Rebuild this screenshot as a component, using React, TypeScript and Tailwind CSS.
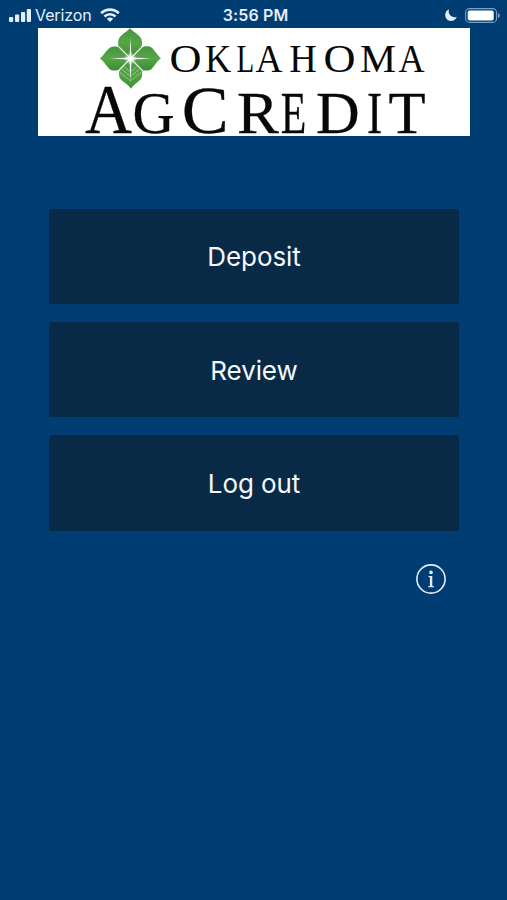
type Glyph = { char: string; x: number; width: number; size: number };

const TOP_LINE: Glyph[] = [
  { char: "O", x: 169.5, width: 32, size: 40 },
  { char: "K", x: 205, width: 26.2, size: 40 },
  { char: "L", x: 236.5, width: 17.7, size: 40 },
  { char: "A", x: 255.4, width: 27, size: 40 },
  { char: "H", x: 289.3, width: 27.5, size: 40 },
  { char: "O", x: 323.5, width: 32, size: 40 },
  { char: "M", x: 360, width: 36, size: 40 },
  { char: "A", x: 398.5, width: 26.1, size: 40 },
];

const BOTTOM_LINE: Glyph[] = [
  { char: "A", x: 85, width: 47, size: 70 },
  { char: "G", x: 132.6, width: 42.1, size: 59 },
  { char: "C", x: 181.8, width: 46.9, size: 68 },
  { char: "R", x: 237, width: 41.8, size: 59 },
  { char: "E", x: 280.8, width: 25.6, size: 59 },
  { char: "D", x: 316, width: 43.6, size: 59 },
  { char: "I", x: 367, width: 15.2, size: 59 },
  { char: "T", x: 388.5, width: 37.1, size: 59 },
];

const ACTIONS = ["Deposit", "Review", "Log out"];

function LogoLine({ glyphs, y }: { glyphs: Glyph[]; y: number }) {
  return (
    <>
      {glyphs.map((g, i) => (
        <text key={i} x={g.x} y={y} fontSize={g.size} textLength={g.width} lengthAdjust="spacingAndGlyphs">
          {g.char}
        </text>
      ))}
    </>
  );
}

/** Four-leaf mark followed by the two-line wordmark. */
function Logo() {
  return (
    <svg
      viewBox="38 28 432 108"
      className="block h-[108px] w-[432px] overflow-visible bg-white font-['Liberation_Serif',serif]"
      role="img"
      aria-label="Oklahoma AgCredit"
    >
      <defs>
        <linearGradient id="leaf" x1="0" y1="0" x2="0" y2="1">
          <stop offset="0" stopColor="#469440" />
          <stop offset="0.5" stopColor="#56a648" />
          <stop offset="1" stopColor="#398d32" />
        </linearGradient>
        <radialGradient id="glow">
          <stop offset="0" stopColor="#fff" />
          <stop offset="0.35" stopColor="#fff" stopOpacity="0.65" />
          <stop offset="1" stopColor="#fff" stopOpacity="0" />
        </radialGradient>
      </defs>
      <g fill="url(#leaf)">
        <path d="M130 28C132 31 138 34 140.5 37.5C142.5 40 142.5 46 140.8 48L130.5 58L119.6 48C117.6 46 117.6 40 119.6 37.500C122 34 128 31 130 28Z" />
        <path d="M161 58.3C158 60 154.500 66 151.500 69C149 71 143.500 71 141 69L130.500 58.500L141 48C143.500 46 149 45.500 151.500 47.500C154.500 50 158 56 161 58.3Z" />
        <path d="M99.800 58.500C103 56 106.500 50.500 109.500 48C112 46 117.500 46 120 48L130.500 58.500L120 69C117.500 71 112 71 109.500 69C106.500 66 103 60 99.800 58.500Z" />
        <path d="M131 88.800C129 85 123 82 120.500 79C118.500 76.500 118.500 71 120.500 69L130.500 59L141 69C142.700 71 142.700 76.500 140.800 79C138.500 82 133 85 131 88.800Z" />
      </g>
      {/* light gaps between the leaves */}
      <path d="M119 47L142 70M142 47L119 70" stroke="#e9f4e4" strokeWidth="1.1" />
      <path d="M130.5 38L131.5 57.4L151 58.5L131.5 59.6L130.5 82L129.5 59.6L110 58.5L129.5 57.4Z" fill="#fff" />
      <g stroke="#b9dcae" strokeWidth="0.8" fill="none" opacity="0.75">
        <path d="M130.5 72L137 66.5M130.5 76.5L140 68.5M130.5 81L141 72.5" />
        <path d="M130.5 72L124 66.5M130.5 76.5L121 68.5M130.5 81L120 72.5" />
      </g>
      <circle cx="130.5" cy="58.5" r="6.5" fill="url(#glow)" />
      <g fill="#080808">
        <LogoLine glyphs={TOP_LINE} y={72.3} />
      </g>
      <g fill="#080808" stroke="#080808" strokeWidth="0.3">
        <LogoLine glyphs={BOTTOM_LINE} y={133.3} />
      </g>
    </svg>
  );
}

function StatusBar() {
  return (
    <header className="grid h-7 grid-cols-[1fr_auto_1fr] items-center pt-[2px] text-[#e4eefa]">
      <div className="flex items-center pl-[9px]">
        <svg viewBox="0 0 22 13" className="h-[13px] w-[22px]" fill="currentColor">
          <rect x="0" y="8" width="4.2" height="5" rx="1" />
          <rect x="6" y="5.5" width="4.2" height="7.5" rx="1" />
          <rect x="12" y="3" width="4.2" height="10" rx="1" />
          <rect x="17.8" y="0" width="4.2" height="13" rx="1" />
        </svg>
        <span className="ml-[4px] text-[16px] leading-none tracking-[-0.1px]">Verizon</span>
        <svg viewBox="0 0 20 14" className="ml-[8px] h-[14px] w-[20px]" fill="none" stroke="currentColor">
          <path d="M1.2 5.2C6.1.4 13.9.4 18.8 5.2" strokeWidth="2.7" />
          <path d="M4.5 8.5C7.6 5.5 12.4 5.5 15.5 8.5" strokeWidth="2.5" />
          <path d="M10 14L6.8 10.8C8.6 9.2 11.4 9.2 13.2 10.8Z" fill="currentColor" stroke="none" />
        </svg>
      </div>
      <span className="pl-[4px] text-[16px] leading-none font-semibold tracking-[0.15px]">3:56 PM</span>
      <div className="flex items-center justify-end pr-[7px]">
        <svg viewBox="0 0 12 12" className="h-[12px] w-[12px]" fill="currentColor">
          <path d="M4 .2C2.6 4.8 6.3 9.3 11.8 8C10.6 10.5 8.5 12 6 12C2.7 12 .2 9.4 .2 6.1C.2 3.4 1.7 1.2 4 .2Z" />
        </svg>
        <svg viewBox="0 0 35 15" className="ml-[8px] h-[15px] w-[35px]">
          <rect x="0.6" y="0.6" width="31" height="13.8" rx="4" fill="none" stroke="#7c9fc4" strokeWidth="1.1" />
          <rect x="2.7" y="2.5" width="26" height="10" rx="2" fill="#fff" />
          <path d="M33 5C35.4 5.8 35.4 9.2 33 10Z" fill="#7c9fc4" />
        </svg>
      </div>
    </header>
  );
}

export default function App() {
  return (
    <div className="flex h-[900px] w-[507px] flex-col bg-[#003d73] font-[Inter,sans-serif]">
      <StatusBar />
      <div className="pl-[38px]">
        <Logo />
      </div>
      <main className="mt-[72.7px] flex flex-col gap-[17.7px] pr-[48px] pl-[49px]">
        {ACTIONS.map((label) => (
          <button
            key={label}
            className="h-[95.5px] rounded-[2px] bg-[#092a46] pt-[2px] text-[26px] leading-none tracking-[-0.1px] text-[#f4f8fd]"
          >
            {label}
          </button>
        ))}
      </main>
      <div className="mt-[33.4px] flex justify-end pr-[61px]">
        <button aria-label="Information">
          <svg viewBox="0 0 30 30" className="block h-[30px] w-[30px]">
            <circle cx="15" cy="15" r="14.1" fill="none" stroke="#e2edf9" strokeWidth="1.6" />
            <circle cx="15" cy="8.4" r="1.8" fill="#e2edf9" />
            <path d="M12.6 12H16.3V22H17.8V23.3H12.4V22H13.9V13.3H12.6Z" fill="#e2edf9" />
          </svg>
        </button>
      </div>
    </div>
  );
}
